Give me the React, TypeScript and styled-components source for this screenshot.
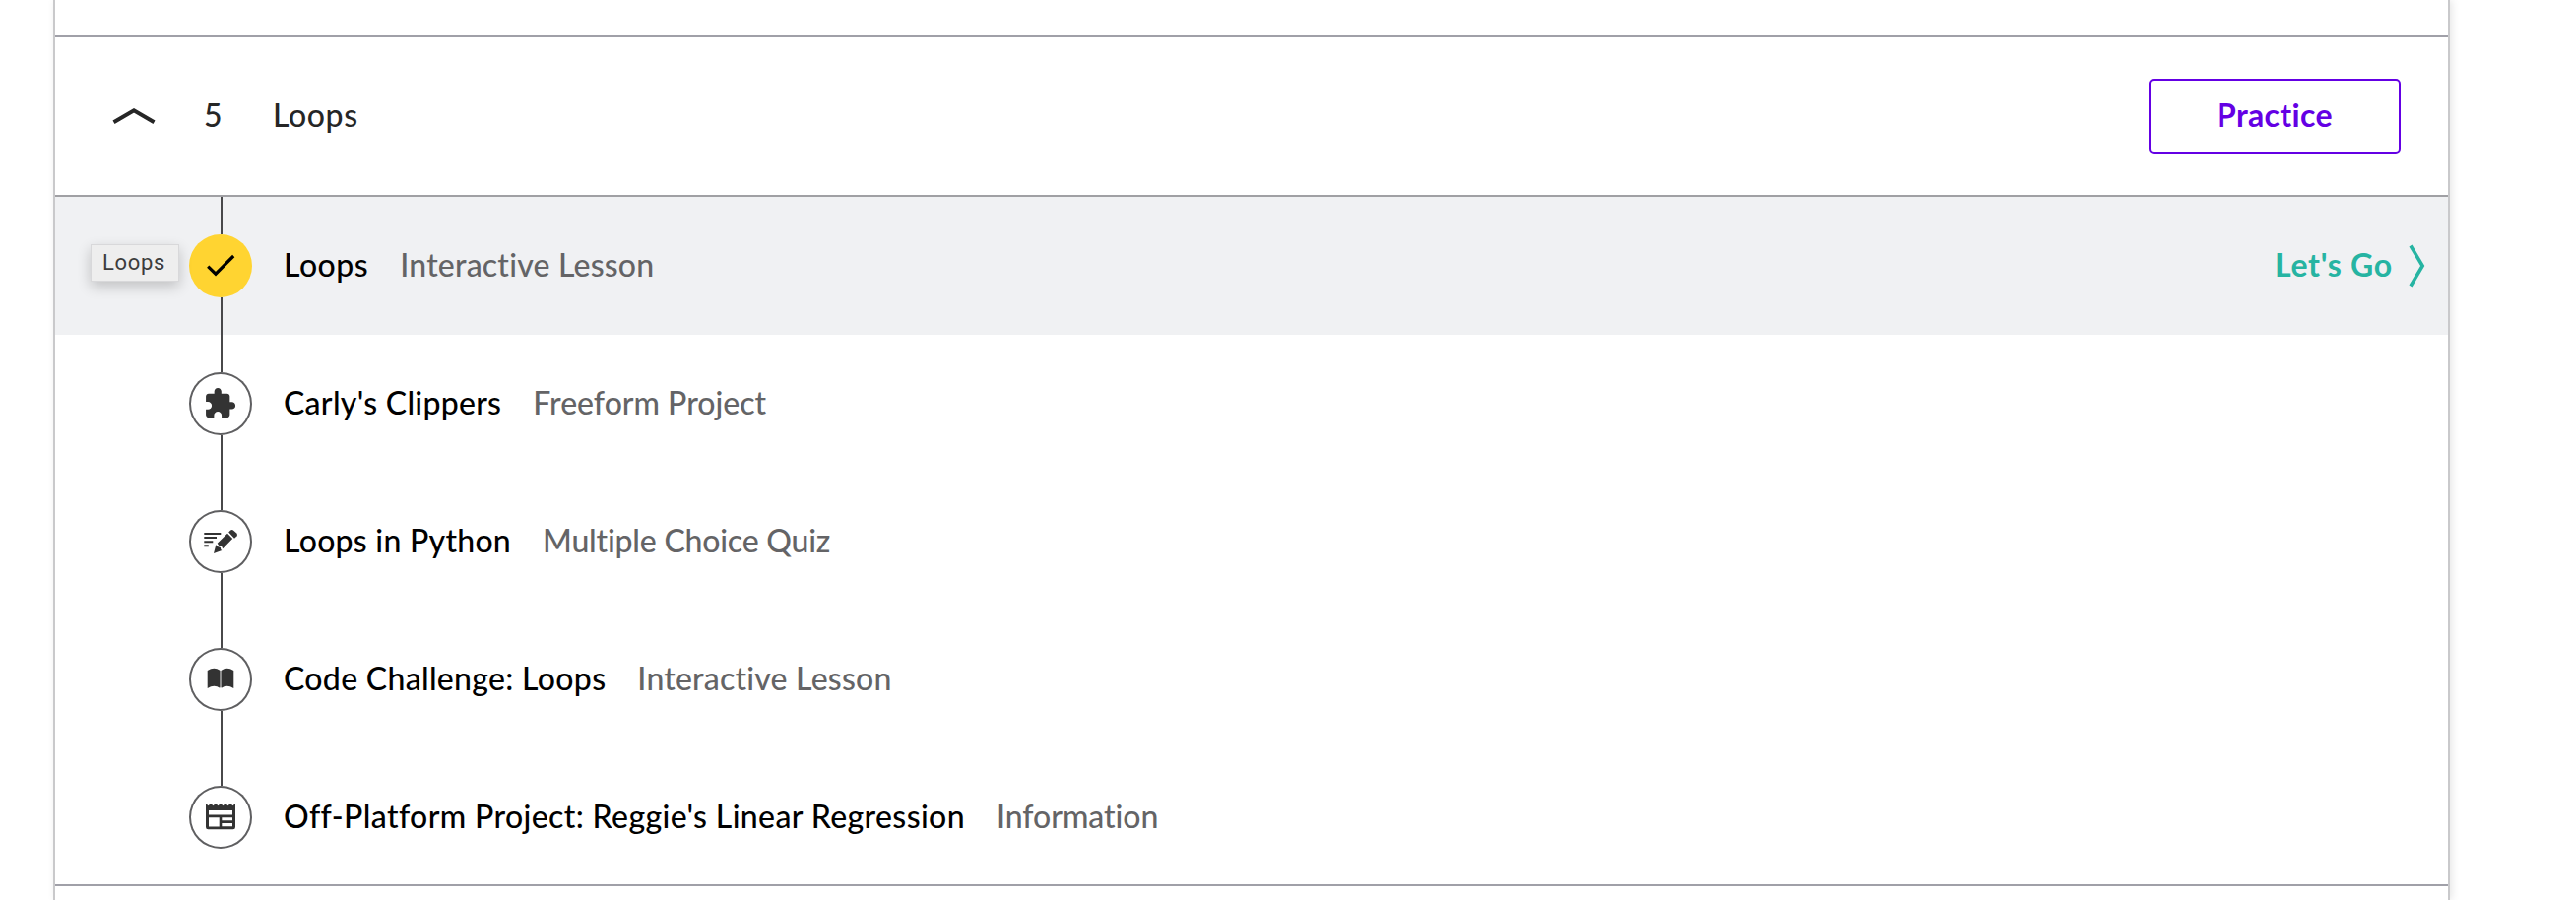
import React from "react";
import styled, { createGlobalStyle } from "styled-components";

const GlobalStyle = createGlobalStyle`
  * { box-sizing: border-box; }
  body {
    margin: 0;
    background: #fff;
    overflow: hidden;
    font-family: Lato, "Noto Sans", sans-serif;
    font-variant-ligatures: none;
  }
`;

const Page = styled.main`
  height: 914px;
  overflow: hidden;
  padding-left: 54px;
`;

const Panel = styled.section`
  width: 2434px;
  height: 914px;
  border: solid #c9c9cb;
  border-width: 0 2px;
  box-shadow: 2px 0 8px rgba(0, 0, 0, 0.1);
  background: #fff;
`;

const PreviousModule = styled.div`
  height: 36px;
`;

const Module = styled.article`
  border-top: 2px solid #a0a0a8;
`;

const ModuleHeader = styled.header`
  display: flex;
  align-items: center;
  height: 162px;
  padding: 0 48px 0 58px;
  border-bottom: 2px solid #a0a0a4;
  color: #262626;
`;

const Label = styled.span<{ $track?: number }>`
  font-size: 32px;
  font-weight: 500;
  line-height: 40px;
  padding-bottom: 3px;
  white-space: nowrap;
  letter-spacing: ${(p) => p.$track ?? 0}px;
`;

const ModuleNumber = styled(Label)`
  width: 70px;
  margin-left: 49px;
`;

const PracticeButton = styled.button`
  width: 256px;
  height: 76px;
  margin-left: auto;
  padding: 0 0 3px;
  border: 2px solid #6400e4;
  border-radius: 5px;
  background: #fff;
  color: #6400e4;
  font: 700 32px Lato, sans-serif;
  letter-spacing: 0.35px;
`;

const Lessons = styled.ul`
  list-style: none;
  margin: 0 0 -2px;
  padding: 0;
`;

const LessonRow = styled.li<{ $active?: boolean }>`
  position: relative;
  display: flex;
  align-items: center;
  height: 140px;
  padding: 0 23px 0 136px;
  background: ${(p) => (p.$active ? "#f0f1f3" : "transparent")};
`;

const Rail = styled.div`
  display: flex;
  flex-direction: column;
  align-items: center;
  width: 64px;
  margin-right: 32px;
`;

const Connector = styled.div<{ $hidden?: boolean }>`
  width: 2px;
  height: 38px;
  margin-left: 2px;
  background: ${(p) => (p.$hidden ? "transparent" : "#48484a")};
`;

const Badge = styled.div<{ $done?: boolean }>`
  width: 64px;
  height: 64px;
  border-radius: 50%;
  background: ${(p) => (p.$done ? "#ffd431" : "#fff")};
  box-shadow: ${(p) => (p.$done ? "none" : "inset 0 0 0 2px #5f5f61")};
`;

const Title = styled(Label)`
  color: #000;
`;

const Kind = styled(Label)`
  margin-left: 32px;
  color: #646466;
`;

const GoLink = styled.a`
  display: flex;
  align-items: center;
  gap: 16px;
  margin-left: auto;
  color: #26b4a2;
`;

const GoText = styled(Label)`
  font-weight: 700;
`;

const Tooltip = styled.div`
  position: absolute;
  left: 36px;
  top: 48px;
  width: 90px;
  height: 38px;
  padding-left: 11px;
  background: #eeeeee;
  border: 1px solid #d8d8da;
  box-shadow: 0 5px 14px rgba(0, 0, 0, 0.2);
  color: #3c3c3c;
  font: 400 22px/35px Roboto, sans-serif;
  letter-spacing: 0.7px;
`;

const CheckIcon = () => (
  <svg width="64" height="64" viewBox="0 0 64 64">
    <path d="M19.2 32.6 27 40.2 45.2 22" fill="none" stroke="#000" strokeWidth="3.2" />
  </svg>
);

const PuzzleIcon = () => (
  <svg width="64" height="64" viewBox="0 0 64 64">
    <path
      transform="translate(14.2 14.6) scale(1.43)"
      fill="#333"
      d="M20.5 11H19V7c0-1.1-.9-2-2-2h-4V3.500C13 2.120 11.880 1 10.500 1S8 2.120 8 3.500V5H4c-1.100 0-1.990.900-1.990 2v3.800H3.500c1.490 0 2.700 1.210 2.700 2.700s-1.210 2.700-2.700 2.700H2V20c0 1.100.900 2 2 2h3.800v-1.500c0-1.490 1.210-2.700 2.700-2.700s2.700 1.210 2.700 2.700V22H17c1.100 0 2-.900 2-2v-4h1.500c1.380 0 2.500-1.120 2.500-2.500S21.880 11 20.500 11z"
    />
  </svg>
);

const QuizIcon = () => (
  <svg width="64" height="64" viewBox="0 0 64 64" fill="#333">
    <path d="M15.300 23h17v2h-17zM15.300 27h12.700v2h-12.700zM15.300 31.200h9v2h-9zM15.300 35.200h4.500v2h-4.500z" />
    <path d="M28.700 33.700 39 23.800 44.200 29 34.200 39.300 33 36.400 30.300 35.900z" />
    <path d="M40.200 22.500 42.200 20.600Q43.700 19.300 45.200 20.700L48.300 23.600Q49.700 25 48.500 26.500L46 28.800z" />
    <path d="M27.300 35.200 29.500 37.200 31.800 37.900 32.300 40.300 33.300 41 25 44z" />
  </svg>
);

const BookIcon = () => (
  <svg width="64" height="64" viewBox="0 0 64 64">
    <path d="M31 23h2v17h-2z" fill="#b5b5b5" />
    <path d="M18.700 22.900Q25.500 18.800 31.300 22.700V40.700Q25.500 36.600 18.700 41zM32.700 22.700Q38.500 18.800 45.300 22.900V41Q38.500 36.600 32.700 40.700z" fill="#333" />
  </svg>
);

const InfoIcon = () => (
  <svg width="64" height="64" viewBox="0 0 64 64">
    <path
      fill="#333"
      fillRule="evenodd"
      d="M17 18l2.500 2.300L22 18l2.500 2.300L27 18l2.500 2.300L32 18l2.500 2.300L37 18l2.500 2.300L42 18l2.500 2.300L47 18V42Q47 44.300 44.700 44.300H19.300Q17 44.300 17 42zM20 25v4.400h24V25zM20 32.200v9.200h10.700V32.200zM33.300 32.200v3h10.700v-3zM33.300 38v3.200h10.700V38z"
    />
  </svg>
);

const lessons = [
  { title: "Loops", track: 0.5, kind: "Interactive Lesson", kindTrack: 0.2, Icon: CheckIcon, done: true },
  { title: "Carly's Clippers", track: 0.28, kind: "Freeform Project", kindTrack: 0, Icon: PuzzleIcon },
  { title: "Loops in Python", track: 0.26, kind: "Multiple Choice Quiz", kindTrack: -0.2, Icon: QuizIcon },
  { title: "Code Challenge: Loops", track: 0.31, kind: "Interactive Lesson", kindTrack: 0.2, Icon: BookIcon },
  { title: "Off-Platform Project: Reggie's Linear Regression", track: 0.375, kind: "Information", kindTrack: -0.05, Icon: InfoIcon },
];

export default function App() {
  return (
    <Page>
      <GlobalStyle />
      <Panel>
        <PreviousModule />
        <Module>
          <ModuleHeader>
            <svg width="44" height="20" viewBox="0 0 44 20">
              <path d="M1.500 16.300 22 4.300 42.500 16.300" fill="none" stroke="#262626" strokeWidth="4" />
            </svg>
            <ModuleNumber>5</ModuleNumber>
            <Label $track={0.6}>Loops</Label>
            <PracticeButton>Practice</PracticeButton>
          </ModuleHeader>
          <Lessons>
            {lessons.map(({ title, track, kind, kindTrack, Icon, done }, i) => (
              <LessonRow key={title} $active={done}>
                <Rail>
                  <Connector />
                  <Badge $done={done}>
                    <Icon />
                  </Badge>
                  <Connector $hidden={i === lessons.length - 1} />
                </Rail>
                <Title $track={track}>{title}</Title>
                <Kind $track={kindTrack}>{kind}</Kind>
                {done && (
                  <>
                    <GoLink>
                      <GoText $track={0.73}>Let's Go</GoText>
                      <svg width="17" height="44" viewBox="0 0 17 44">
                        <path d="M2 1.500 14.200 22 2 42.500" fill="none" stroke="#26b4a2" strokeWidth="3.600" />
                      </svg>
                    </GoLink>
                    <Tooltip>Loops</Tooltip>
                  </>
                )}
              </LessonRow>
            ))}
          </Lessons>
        </Module>
        <Module />
      </Panel>
    </Page>
  );
}
